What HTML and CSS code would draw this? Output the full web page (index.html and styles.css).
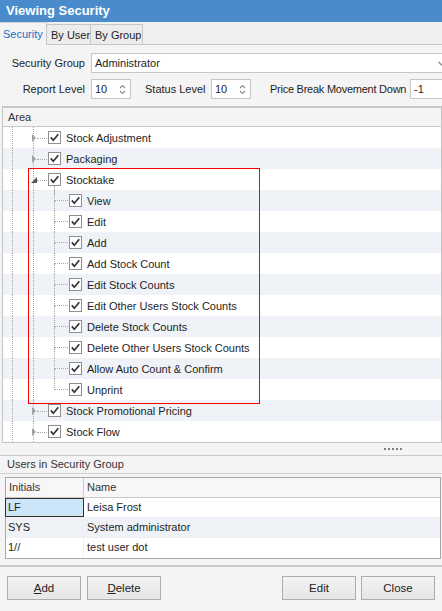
FILE: index.html
```html
<!DOCTYPE html>
<html>
<head>
<meta charset="utf-8">
<title>Viewing Security</title>
<link rel="stylesheet" href="styles.css">
</head>
<body>
<div class="win">
  <div class="title">Viewing Security</div>

  <div class="tabs">
    <div class="tab active">Security</div>
    <div class="tab t2">By User</div>
    <div class="tab t3">By Group</div>
    <div class="tab-fill"></div>
  </div>

  <div class="form">
    <div class="frow">
      <span class="lbl">Security Group</span>
      <div class="input combo"><span>Administrator</span>
        <svg class="dd" width="7" height="5" viewBox="0 0 7 5"><path d="M0.5 1 L3.5 4 L6.5 1" fill="none" stroke="#8a8a8a" stroke-width="1.2"/></svg>
      </div>
    </div>
    <div class="frow">
      <span class="lbl">Report Level</span>
      <div class="input spin"><span>10</span>
        <svg class="sp" width="7" height="13" viewBox="0 0 7 13"><path d="M1 5 L3.5 2.5 L6 5 M1 8 L3.5 10.5 L6 8" fill="none" stroke="#8c8c8c" stroke-width="1.1"/></svg>
      </div>
      <span class="lbl2">Status Level</span>
      <div class="input spin"><span>10</span>
        <svg class="sp" width="7" height="13" viewBox="0 0 7 13"><path d="M1 5 L3.5 2.5 L6 5 M1 8 L3.5 10.5 L6 8" fill="none" stroke="#8c8c8c" stroke-width="1.1"/></svg>
      </div>
      <span class="lbl3">Price Break Movement Down</span>
      <div class="input num"><span>-1</span></div>
    </div>
  </div>

  <div class="tree">
    <div class="thead">Area</div>
    <div class="tbody">
      <div class="row l1"><span class="exp closed"></span><span class="hl"></span><span class="cb"><svg width="11" height="11" viewBox="0 0 11 11"><path d="M1.8 5.4 L4.3 8.2 L9.3 2.2" fill="none" stroke="#333" stroke-width="1.7"/></svg></span><span class="txt">Stock Adjustment</span></div>
      <div class="row l1"><span class="exp closed"></span><span class="hl"></span><span class="cb"><svg width="11" height="11" viewBox="0 0 11 11"><path d="M1.8 5.4 L4.3 8.2 L9.3 2.2" fill="none" stroke="#333" stroke-width="1.7"/></svg></span><span class="txt">Packaging</span></div>
      <div class="row l1"><span class="exp open"></span><span class="hl"></span><span class="cb has-kids"><svg width="11" height="11" viewBox="0 0 11 11"><path d="M1.8 5.4 L4.3 8.2 L9.3 2.2" fill="none" stroke="#333" stroke-width="1.7"/></svg></span><span class="txt">Stocktake</span></div>
      <div class="row l2"><span class="br"><span class="bt"></span><span class="bb"></span></span><span class="cb"><svg width="11" height="11" viewBox="0 0 11 11"><path d="M1.8 5.4 L4.3 8.2 L9.3 2.2" fill="none" stroke="#333" stroke-width="1.7"/></svg></span><span class="txt">View</span></div>
      <div class="row l2"><span class="br"><span class="bt"></span><span class="bb"></span></span><span class="cb"><svg width="11" height="11" viewBox="0 0 11 11"><path d="M1.8 5.4 L4.3 8.2 L9.3 2.2" fill="none" stroke="#333" stroke-width="1.7"/></svg></span><span class="txt">Edit</span></div>
      <div class="row l2"><span class="br"><span class="bt"></span><span class="bb"></span></span><span class="cb"><svg width="11" height="11" viewBox="0 0 11 11"><path d="M1.8 5.4 L4.3 8.2 L9.3 2.2" fill="none" stroke="#333" stroke-width="1.7"/></svg></span><span class="txt">Add</span></div>
      <div class="row l2"><span class="br"><span class="bt"></span><span class="bb"></span></span><span class="cb"><svg width="11" height="11" viewBox="0 0 11 11"><path d="M1.8 5.4 L4.3 8.2 L9.3 2.2" fill="none" stroke="#333" stroke-width="1.7"/></svg></span><span class="txt">Add Stock Count</span></div>
      <div class="row l2"><span class="br"><span class="bt"></span><span class="bb"></span></span><span class="cb"><svg width="11" height="11" viewBox="0 0 11 11"><path d="M1.8 5.4 L4.3 8.2 L9.3 2.2" fill="none" stroke="#333" stroke-width="1.7"/></svg></span><span class="txt">Edit Stock Counts</span></div>
      <div class="row l2"><span class="br"><span class="bt"></span><span class="bb"></span></span><span class="cb"><svg width="11" height="11" viewBox="0 0 11 11"><path d="M1.8 5.4 L4.3 8.2 L9.3 2.2" fill="none" stroke="#333" stroke-width="1.7"/></svg></span><span class="txt">Edit Other Users Stock Counts</span></div>
      <div class="row l2"><span class="br"><span class="bt"></span><span class="bb"></span></span><span class="cb"><svg width="11" height="11" viewBox="0 0 11 11"><path d="M1.8 5.4 L4.3 8.2 L9.3 2.2" fill="none" stroke="#333" stroke-width="1.7"/></svg></span><span class="txt">Delete Stock Counts</span></div>
      <div class="row l2"><span class="br"><span class="bt"></span><span class="bb"></span></span><span class="cb"><svg width="11" height="11" viewBox="0 0 11 11"><path d="M1.8 5.4 L4.3 8.2 L9.3 2.2" fill="none" stroke="#333" stroke-width="1.7"/></svg></span><span class="txt">Delete Other Users Stock Counts</span></div>
      <div class="row l2"><span class="br"><span class="bt"></span><span class="bb"></span></span><span class="cb"><svg width="11" height="11" viewBox="0 0 11 11"><path d="M1.8 5.4 L4.3 8.2 L9.3 2.2" fill="none" stroke="#333" stroke-width="1.7"/></svg></span><span class="txt">Allow Auto Count &amp; Confirm</span></div>
      <div class="row l2"><span class="br last"><span class="bt"></span><span class="bb"></span></span><span class="cb"><svg width="11" height="11" viewBox="0 0 11 11"><path d="M1.8 5.4 L4.3 8.2 L9.3 2.2" fill="none" stroke="#333" stroke-width="1.7"/></svg></span><span class="txt">Unprint</span></div>
      <div class="row l1"><span class="exp closed"></span><span class="hl"></span><span class="cb"><svg width="11" height="11" viewBox="0 0 11 11"><path d="M1.8 5.4 L4.3 8.2 L9.3 2.2" fill="none" stroke="#333" stroke-width="1.7"/></svg></span><span class="txt">Stock Promotional Pricing</span></div>
      <div class="row l1"><span class="exp closed"></span><span class="hl"></span><span class="cb"><svg width="11" height="11" viewBox="0 0 11 11"><path d="M1.8 5.4 L4.3 8.2 L9.3 2.2" fill="none" stroke="#333" stroke-width="1.7"/></svg></span><span class="txt">Stock Flow</span></div>
      <div class="redbox"></div>
    </div>
  </div>

  <div class="splitter"><span class="grip"><i></i><i></i><i></i><i></i><i></i></span></div>

  <div class="ulabel">Users in Security Group</div>

  <div class="ugrid">
    <div class="grow ghead"><span class="c1">Initials</span><span class="c2">Name</span></div>
    <div class="grow"><span class="c1 sel">LF</span><span class="c2">Leisa Frost</span></div>
    <div class="grow alt"><span class="c1">SYS</span><span class="c2">System administrator</span></div>
    <div class="grow"><span class="c1">1//</span><span class="c2">test user dot</span></div>
  </div>

  <div class="footer">
    <button class="btn"><u>A</u>dd</button>
    <button class="btn"><u>D</u>elete</button>
    <span class="spacer"></span>
    <button class="btn">Edit</button>
    <button class="btn">Close</button>
  </div>
</div>
</body>
</html>
```

FILE: styles.css
```css
* { box-sizing: border-box; }
html, body { margin: 0; padding: 0; }
body {
  width: 442px;
  height: 611px;
  overflow: hidden;
  background: #f4f4f4;
  font-family: "Liberation Sans", Arial, sans-serif;
  font-size: 11px;
  color: #1e1e1e;
}
.win { display: flex; flex-direction: column; height: 611px; }

.title {
  flex: none;
  height: 22px;
  background: #4a8ccb;
  color: #fff;
  font-weight: bold;
  font-size: 13px;
  line-height: 21px;
  padding-left: 6px;
}

.tabs {
  flex: none;
  height: 23px;
  display: flex;
  align-items: flex-end;
  background: #f0f0f0;
}
.tab {
  flex: none;
  height: 21px;
  line-height: 20px;
  border: 1px solid #c6c6c6;
  border-left: none;
  background: #ececec;
  padding-left: 4px;
  color: #1e1e1e;
  white-space: nowrap;
}
.tab.active {
  width: 47px;
  height: 23px;
  line-height: 22px;
  border-top: 1px solid #d4d4d4;
  border-bottom: none;
  background: #f4f4f4;
  color: #1b6ec6;
  padding-left: 3px;
}
.tab.t2 { width: 44px; }
.tab.t3 { width: 52px; }
.tab-fill { flex: 1; height: 1px; border-bottom: 1px solid #c6c6c6; }

.form {
  flex: none;
  height: 61px;
  padding-top: 8px;
  display: flex;
  flex-direction: column;
  gap: 6px;
}
.frow { display: flex; align-items: center; height: 20px; white-space: nowrap; }
.lbl { flex: none; width: 85px; text-align: right; margin-right: 6px; }
.lbl2 { flex: none; margin-left: 14px; margin-right: 5px; width: 61px; }
.lbl3 { flex: none; margin-left: 19px; margin-right: 5px; width: 135px; letter-spacing: -0.25px; }
.input {
  flex: none;
  height: 20px;
  background: #fff;
  border: 1px solid #c6c6c6;
  display: flex;
  align-items: center;
  padding-left: 3px;
  color: #1e1e1e;
}
.combo { width: 358px; }
.combo .dd { margin-left: auto; margin-right: 3px; }
.spin { width: 40px; }
.spin .sp { margin-left: auto; margin-right: 4px; }
.num { width: 40px; }

.tree {
  flex: none;
  margin-left: 2px;
  border: 1px solid #c4c4c4;
  border-top: 2px solid #c9c9c9;
  background: #fff;
}
.thead {
  height: 19px;
  line-height: 18px;
  background: #f4f4f4;
  border-bottom: 1px solid #c8c8c8;
  padding-left: 5px;
  color: #333;
}
.tbody { position: relative; }
.row {
  height: 21px;
  display: flex;
  align-items: center;
  white-space: nowrap;
  background:
    linear-gradient(#a9a9a9 50%, transparent 50%) 9px 0 / 1px 2px repeat-y,
    linear-gradient(#a9a9a9 50%, transparent 50%) 30px 0 / 1px 2px repeat-y,
    #ffffff;
}
.row:nth-child(even) { background-color: #eff3f8; }
.row.l1 { padding-left: 28px; }
.row.l2 { padding-left: 51px; }

.exp { width: 6px; height: 8px; position: relative; flex: none; }
.exp.closed::before {
  content: "";
  position: absolute;
  left: 1px; top: 0;
  border-left: 4px solid #a2a2a2;
  border-top: 4px solid transparent;
  border-bottom: 4px solid transparent;
}
.exp.open::before {
  content: "";
  position: absolute;
  left: 0; top: 1px;
  border-right: 6px solid #555;
  border-top: 6px solid transparent;
}
.hl { width: 10px; height: 1px; border-top: 1px dotted #a9a9a9; flex: none; margin-top: 1px; }

.cb {
  flex: none;
  width: 13px;
  height: 13px;
  border: 1px solid #8f8f8f;
  background: #fff;
  margin-left: 1px;
  position: relative;
}
.cb svg { display: block; }
.cb.has-kids::after {
  content: "";
  position: absolute;
  left: 5px;
  top: 12px;
  height: 8px;
  border-left: 1px dotted #a9a9a9;
}
.txt { margin-left: 5px; color: #1e1e1e; }

.br {
  flex: none;
  width: 14px;
  align-self: stretch;
  display: flex;
  flex-direction: column;
}
.br .bt { height: 11px; border-left: 1px dotted #a9a9a9; border-bottom: 1px dotted #a9a9a9; }
.br .bb { flex: 1; border-left: 1px dotted #a9a9a9; }
.br.last .bb { border-left: none; }

.redbox {
  position: absolute;
  left: 25px;
  top: 41px;
  width: 232px;
  height: 236px;
  border: 1px solid #ff0000;
  pointer-events: none;
}

.splitter {
  flex: none;
  height: 13px;
  border-bottom: 1px solid #c8c8c8;
  display: flex;
  align-items: center;
  padding-left: 384px;
}
.grip { display: flex; gap: 2px; }
.grip i { display: block; width: 2px; height: 2px; background: #7d7d7d; }

.ulabel {
  flex: none;
  height: 18px;
  line-height: 17px;
  border-bottom: 1px solid #cfcfcf;
  padding-left: 7px;
  color: #333;
}

.ugrid {
  flex: none;
  margin: 3px 1px 0 5px;
  border: 1px solid #a8a8a8;
  background: #fff;
}
.grow {
  display: flex;
  height: 20px;
  border-bottom: 1px solid #eceff3;
  white-space: nowrap;
}
.grow:last-child { border-bottom: none; }
.grow.alt { background: #eff3f8; }
.grow .c1 {
  flex: none;
  width: 78px;
  border-right: 1px solid #f0f0f0;
  padding-left: 2px;
  line-height: 19px;
}
.grow .c2 { flex: 1; padding-left: 3px; line-height: 19px; }
.ghead { background: #f7f7f7; border-bottom: 1px solid #c8c8c8; color: #333; }
.ghead .c1 { border-right: 1px solid #c8c8c8; padding-left: 3px; }
.grow .c1.sel {
  background: #cde5f8;
  border: 1px solid #3a3024;
  margin-left: -1px;
  width: 79px;
  line-height: 17px;
  padding-left: 2px;
}

.footer {
  flex: none;
  margin-top: 6px;
  border-top: 2px solid #c9c9c9;
  padding: 9px 7px 0 7px;
  display: flex;
  gap: 6px;
}
.spacer { flex: 1; }
.btn {
  flex: none;
  width: 74px;
  height: 24px;
  border: 1px solid #adadad;
  background: linear-gradient(#f3f3f3, #e6e6e6);
  font-family: "Liberation Sans", Arial, sans-serif;
  font-size: 11.5px;
  color: #222;
  padding: 0;
}
.btn:last-child { margin-left: -1px; }
```
